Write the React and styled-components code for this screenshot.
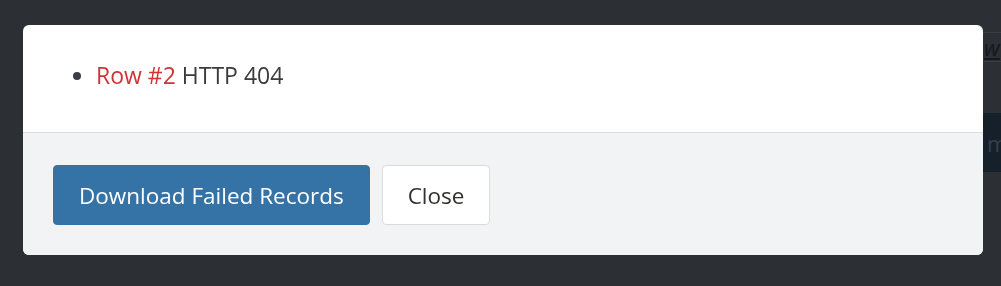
import React from 'react';
import styled, { createGlobalStyle } from 'styled-components';

const GlobalStyle = createGlobalStyle`
    html, body {
        margin: 0;
        padding: 0;
        background: #2c2f34;
        font-family: "Segoe UI", "Open Sans", "Noto Sans", sans-serif;
    }
`;

const Page = styled.div`
    width: 1001px;
    height: 286px;
    display: flex;
    justify-content: flex-end;
    overflow: hidden;
`;

const SideColumn = styled.div`
    width: 60px;
    display: flex;
    flex-direction: column;
    padding-top: 32px;
`;

const TabStrip = styled.div`
    height: 28px;
    border-top: 1px solid #3b3f45;
    border-bottom: 1px solid #3b3f45;
    padding-left: 43px;
    display: flex;
    align-items: center;
`;

const TabLink = styled.span`
    font-size: 22px;
    font-style: italic;
    color: #15181c;
    text-decoration: underline;
    line-height: 1;
    white-space: nowrap;
`;

const NavyBlock = styled.div`
    margin-top: 51px;
    height: 59px;
    background: #15202b;
    padding-left: 46px;
    display: flex;
    align-items: center;
    font-size: 22px;
    color: #36414c;
    white-space: nowrap;
`;

const Overlay = styled.div`
    position: fixed;
    inset: 0;
    padding: 25px 0 0 23px;
`;

const Modal = styled.div`
    width: 960px;
    border-radius: 6px;
    overflow: hidden;
    background: #ffffff;
`;

const ModalBody = styled.div`
    padding: 35px 32px 42px;
    border-bottom: 1px solid #dcdde0;
`;

const ErrorList = styled.ul`
    margin: 0;
    padding-left: 41px;
    font-size: 23px;
    line-height: 30px;
    color: #3b3b3b;
    li::marker {
        color: #3b3f45;
    }
`;

const RowLabel = styled.span`
    color: #cf3437;
`;

const ModalFooter = styled.div`
    background: #f2f3f5;
    padding: 32px 30px 30px;
    display: flex;
    gap: 12px;
`;

const Button = styled.button`
    height: 60px;
    padding: 0 25px;
    border-radius: 4px;
    font-family: inherit;
    font-size: 22.5px;
    cursor: pointer;
    border: 1px solid ${(p) => (p.$primary ? '#3572a5' : '#d8dbe0')};
    background: ${(p) => (p.$primary ? '#3572a5' : '#ffffff')};
    color: ${(p) => (p.$primary ? '#ffffff' : '#323130')};
`;

function App() {
    return (
        <>
            <GlobalStyle />
            <Page>
                <SideColumn>
                    <TabStrip>
                        <TabLink>w</TabLink>
                    </TabStrip>
                    <NavyBlock>m</NavyBlock>
                </SideColumn>
            </Page>
            <Overlay>
                <Modal>
                    <ModalBody>
                        <ErrorList>
                            <li>
                                <RowLabel>Row #2</RowLabel> HTTP 404
                            </li>
                        </ErrorList>
                    </ModalBody>
                    <ModalFooter>
                        <Button $primary>Download Failed Records</Button>
                        <Button>Close</Button>
                    </ModalFooter>
                </Modal>
            </Overlay>
        </>
    );
}

export default App;
